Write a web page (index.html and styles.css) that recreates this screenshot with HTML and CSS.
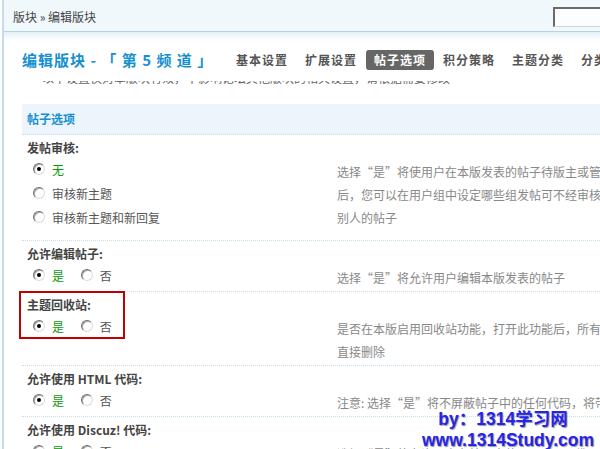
FILE: index.html
```html
<!DOCTYPE html>
<html lang="zh-CN">
<head>
<meta charset="utf-8">
<title>编辑版块</title>
<link rel="stylesheet" href="styles.css">
</head>
<body>
<div class="page">
  <div class="topbar">
    <div class="crumb">版块 &raquo; 编辑版块</div>
    <input class="search" type="text">
  </div>
  <div class="fade"></div>
  <div class="titlebar">
    <h1 class="title">编辑版块 - 「 第 5 频 道 」</h1>
    <ul class="tabs">
      <li>基本设置</li>
      <li>扩展设置</li>
      <li class="active">帖子选项</li>
      <li>积分策略</li>
      <li>主题分类</li>
      <li>分类信息</li>
    </ul>
  </div>
  <div class="clipline"><p>以下设置仅对本版块有效，不影响论坛其他版块的相关设置，请根据需要修改</p></div>

  <div class="section">
    <div class="sechead">帖子选项</div>

    <div class="setting first">
      <div class="label">发帖审核:</div>
      <div class="body tall">
        <div class="opts">
          <label class="opt block"><span class="radio on"></span><span class="yes">无</span></label>
          <label class="opt block"><span class="radio"></span>审核新主题</label>
          <label class="opt block"><span class="radio"></span>审核新主题和新回复</label>
        </div>
        <div class="desc">选择“是”将使用户在本版发表的帖子待版主或管理员审核通过<br>后，您可以在用户组中设定哪些组发帖可不经审核，也可以审核<br>别人的帖子</div>
      </div>
    </div>

    <div class="setting">
      <div class="label">允许编辑帖子:</div>
      <div class="body">
        <div class="opts">
          <label class="opt"><span class="radio on"></span><span class="yes">是</span></label>
          <label class="opt"><span class="radio"></span>否</label>
        </div>
        <div class="desc">选择“是”将允许用户编辑本版发表的帖子</div>
      </div>
    </div>

    <div class="setting">
      <div class="label">主题回收站:</div>
      <div class="body">
        <div class="opts">
          <label class="opt"><span class="radio on"></span><span class="yes">是</span></label>
          <label class="opt"><span class="radio"></span>否</label>
        </div>
        <div class="desc">是否在本版启用回收站功能，打开此功能后，所有被删除的主题将被放到回收站中，而不是被<br>直接删除</div>
      </div>
      <div class="highlight"></div>
    </div>

    <div class="setting">
      <div class="label">允许使用 HTML 代码:</div>
      <div class="body">
        <div class="opts">
          <label class="opt"><span class="radio on"></span><span class="yes">是</span></label>
          <label class="opt"><span class="radio"></span>否</label>
        </div>
        <div class="desc">注意: 选择“是”将不屏蔽帖子中的任何代码，将带来严重的安全隐患，请慎用</div>
      </div>
    </div>

    <div class="setting">
      <div class="label">允许使用 Discuz! 代码:</div>
      <div class="body">
        <div class="opts">
          <label class="opt"><span class="radio on"></span><span class="yes">是</span></label>
          <label class="opt"><span class="radio"></span>否</label>
        </div>
        <div class="desc">选择“是”将允许用户在帖子中使用 Discuz! 代码</div>
      </div>
    </div>
  </div>
</div>

<div class="watermark">
  <div class="wm-by">by：1314学习网</div>
  <div>www.1314Study.com</div>
</div>
</body>
</html>
```

FILE: styles.css
```css
html, body {
  margin: 0;
  padding: 0;
  overflow: hidden;
  background: #fff;
}

body {
  font-family: "Noto Sans CJK SC", "DejaVu Sans", sans-serif;
  font-size: 12px;
  color: #555;
  width: 600px;
  height: 449px;
  position: relative;
}

.page {
  margin-left: 2px;
  border-left: 2px solid #c6dcea;
  min-height: 449px;
}

.topbar {
  height: 31px;
  background: #f0f8fc;
  border-bottom: 1px solid #b3d2e2;
  display: flex;
  align-items: center;
  justify-content: space-between;
  padding-left: 9px;
}

.crumb {
  color: #444;
  font-size: 12px;
  line-height: 16px;
  margin-top: 2px;
}

.search {
  width: 60px;
  height: 15px;
  margin: 3px -20px 0 0;
  padding: 1px 2px;
  border-width: 2px 1px 1px 2px;
  border-style: solid;
  border-color: #6a6a6a #d4d4d4 #d4d4d4 #6a6a6a;
  background: #fbfdfe;
}

.fade {
  height: 8px;
  background: linear-gradient(#e3f0f7, #ffffff);
}

.titlebar {
  height: 40px;
  display: flex;
  align-items: center;
  padding-left: 18px;
  white-space: nowrap;
}

.title {
  flex: 0 0 206px;
  margin: 0;
  font-size: 15px;
  font-weight: bold;
  color: #1590cf;
  letter-spacing: 1px;
  line-height: 20px;
}

.tabs {
  list-style: none;
  margin: 0;
  padding: 0;
  display: flex;
}

.tabs li {
  padding: 0 8px;
  margin-right: 1px;
  height: 20px;
  line-height: 20px;
  font-weight: bold;
  color: #555;
  letter-spacing: 1px;
  border-radius: 3px;
}

.tabs li.active {
  background: #666;
  color: #fff;
}

.clipline {
  height: 6px;
  overflow: hidden;
  padding-left: 38px;
  margin: 1px 0 17px;
  white-space: nowrap;
}

.clipline p {
  margin: -11px 0 0;
  line-height: 16px;
  color: #666;
}

.section {
  margin-left: 18px;
}

.sechead {
  height: 30px;
  line-height: 30px;
  padding-left: 5px;
  background: #eef4fc;
  border-bottom: 1px dotted #c5dff0;
  font-weight: bold;
  color: #1590cf;
}

.setting {
  position: relative;
  border-top: 1px dotted #c5dff0;
}

.setting.first {
  border-top: none;
}

.label {
  padding: 4px 0 0 5px;
  line-height: 18px;
  font-weight: bold;
  color: #444;
}

.body {
  display: grid;
  grid-template-columns: 315px auto;
  padding-bottom: 2px;
}

.body.tall {
  padding-bottom: 11px;
}

.opts {
  padding-left: 11px;
  white-space: nowrap;
}

.opt {
  display: inline-flex;
  align-items: center;
  height: 24px;
  margin-right: 14px;
  color: #555;
}

.opt.block {
  display: flex;
}

.radio {
  position: relative;
  width: 10px;
  height: 10px;
  margin-right: 7px;
  border-radius: 50%;
  border-style: solid;
  border-width: 1px;
  border-color: #6f6f6f #dcdcdc #dcdcdc #6f6f6f;
  background: #fff;
  box-shadow: inset 1px 1px 0 #a8a8a8;
}

.radio.on::after {
  content: "";
  position: absolute;
  left: 3px;
  top: 3px;
  width: 4px;
  height: 4px;
  border-radius: 50%;
  background: #000;
}

.yes {
  color: #0a9a0a;
}

.desc {
  padding-top: 3px;
  line-height: 23px;
  color: #888;
  white-space: nowrap;
}

.highlight {
  position: absolute;
  left: -3px;
  top: -1px;
  width: 102px;
  height: 44px;
  border: 2px solid #c00000;
  pointer-events: none;
}

.watermark {
  position: absolute;
  left: 418px;
  top: 409px;
  width: 180px;
  text-align: center;
  font-family: "Liberation Sans", "Noto Sans CJK SC", sans-serif;
  font-size: 17.5px;
  font-weight: bold;
  line-height: 21px;
  color: #2424f0;
  text-shadow: 1px 1px 1px #9a9a9a;
  white-space: nowrap;
}

.wm-by {
  padding-right: 10px;
}
```
